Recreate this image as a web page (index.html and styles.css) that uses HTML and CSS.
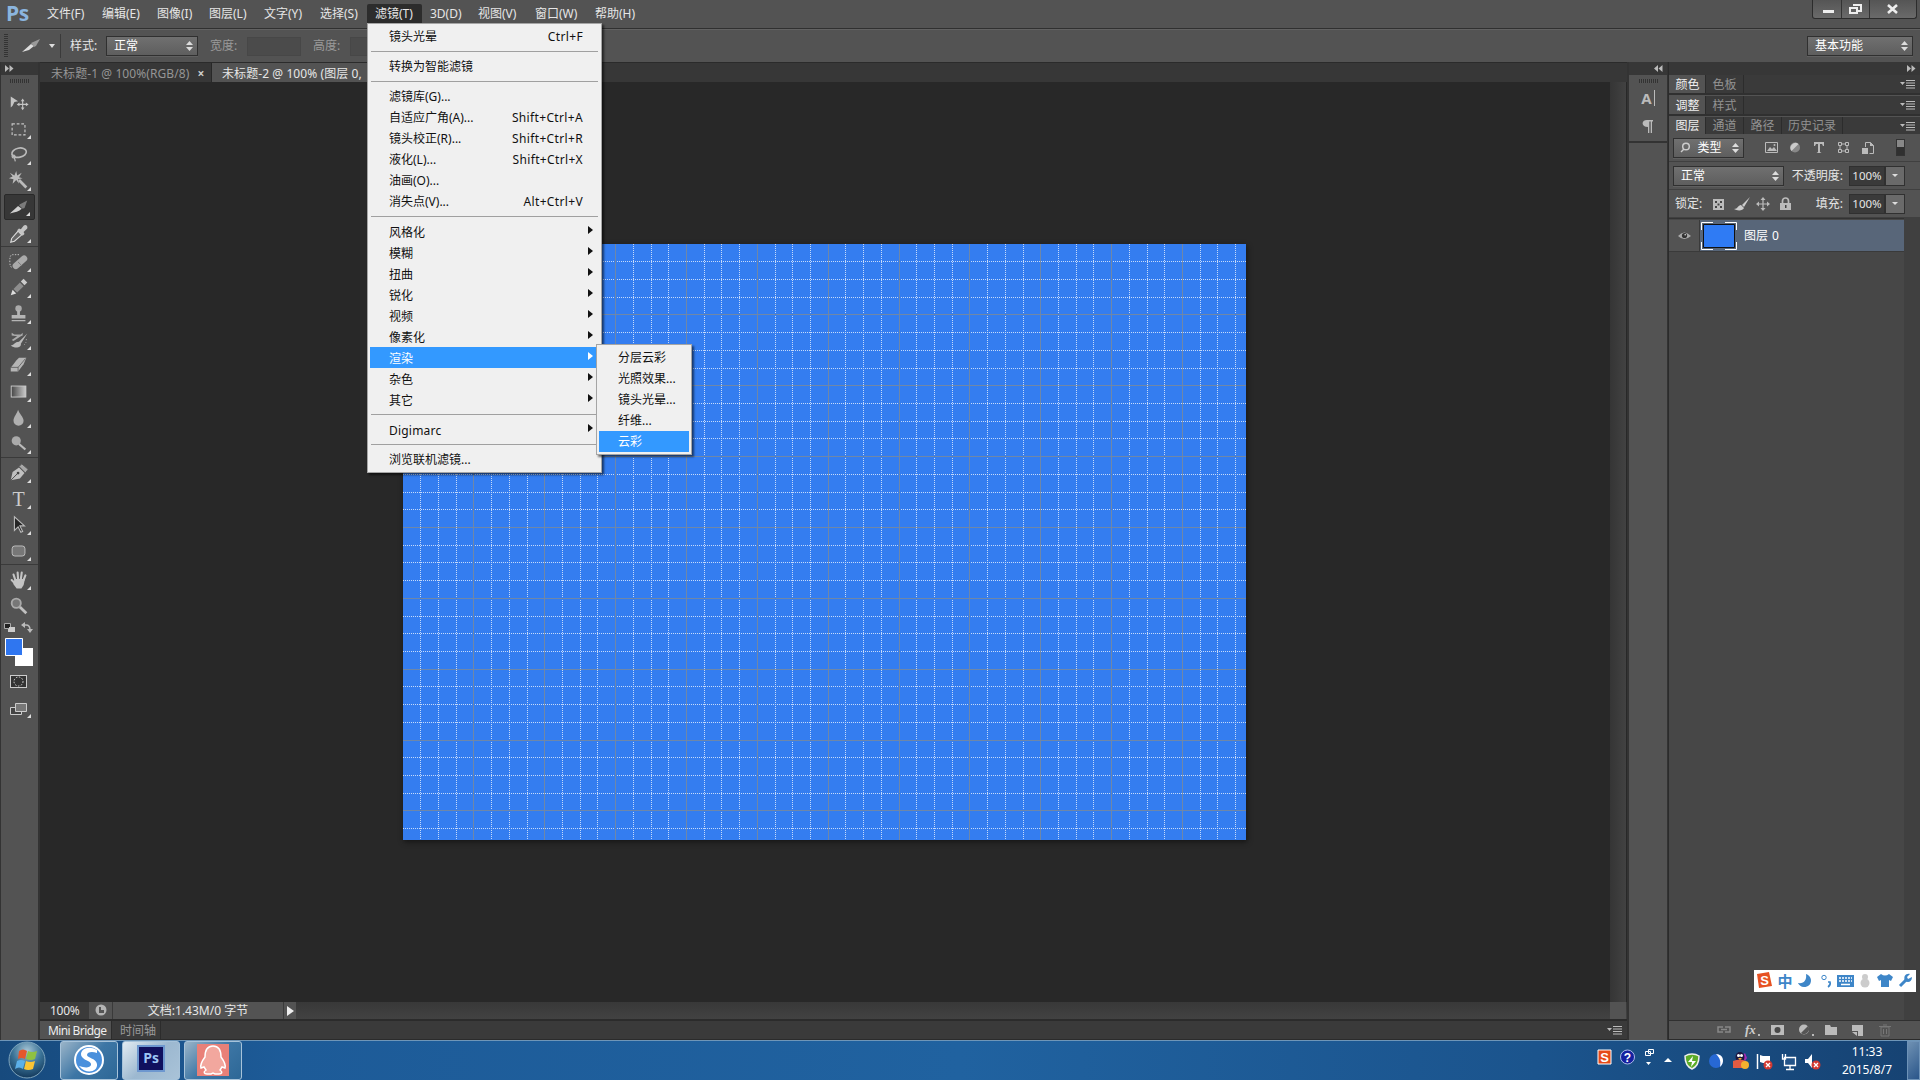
FILE: index.html
```
<!DOCTYPE html>
<html lang="zh-CN">
<head>
<meta charset="utf-8">
<title>Photoshop</title>
<link rel="stylesheet" href="styles.css">
</head>
<body>
<div class="app">
  <header class="menubar">
    <div class="logo">Ps</div>
    <nav class="menus">
      <span class="m55">文件(F)</span><span class="m55">编辑(E)</span><span class="m52">图像(I)</span><span class="m55">图层(L)</span><span class="m56">文字(Y)</span><span class="m55">选择(S)</span><span class="m55 open">滤镜(T)</span><span class="m48">3D(D)</span><span class="m57">视图(V)</span><span class="m60">窗口(W)</span><span class="m57">帮助(H)</span>
    </nav>
    <div class="winbtns">
      <span><svg width="28" height="18"><path d="M10 10h11v3H10z" fill="#eee"/></svg></span>
      <span><svg width="27" height="18" fill="none" stroke="#eee" stroke-width="2"><path d="M11 5h8v6h-3M8 8h7v5H8z"/></svg></span>
      <span><svg width="46" height="18" stroke="#eee" stroke-width="2.6"><path d="M18 5l9 8M27 5l-9 8"/></svg></span>
    </div>
  </header>

  <div class="options">
    <i class="grip-v"></i>
    <svg class="opt-icon" width="36" height="20"><path d="M0 16L9 8l3 2-5 4z" fill="#ddd"/><path d="M9 7l9-4-4 7-2 1z" fill="#999"/><path d="M27 8h6l-3 4z" fill="#ddd"/></svg>
    <i class="vsep"></i>
    <label class="lbl-style">样式:</label>
    <div class="select sel-style">正常<svg width="7" height="12"><path d="M0 5l3.500-4L7 5zM0 7l3.500 4L7 7z" fill="#ddd"/></svg></div>
    <label class="dim lbl-w">宽度:</label><i class="field"></i>
    <label class="dim lbl-h">高度:</label><i class="field"></i>
    <div class="select sel-ws">基本功能<svg width="7" height="12"><path d="M0 5l3.500-4L7 5zM0 7l3.500 4L7 7z" fill="#ddd"/></svg></div>
  </div>

  <main class="work">
    <aside class="toolbox">
      <div class="collapse left"><svg width="9" height="7"><path d="M0 0l4 3.500L0 7zM4.500 0l4 3.500-4 3.500z" fill="#bbb"/></svg></div>
      <div class="grip-h"></div>
      <div class="group">
        <div class="tool"><svg viewBox="0 0 24 24"><path d="M3 5l8 5-4 1-2 4-2 2z" fill="#c4c4c4"/><path d="M16 9v9M11.500 13.500h9" stroke="#c4c4c4" stroke-width="1.200"/><path d="M14 10l2-3 2 3zM14 17l2 3 2-3zM12.500 11.500l-3 2 3 2zM19.500 11.500l3 2-3 2z" fill="#c4c4c4"/></svg></div>
        <div class="tool more"><svg viewBox="0 0 24 24"><path d="M4.500 6.500h14v12h-14z" fill="none" stroke="#c4c4c4" stroke-width="1.300" stroke-dasharray="3 2"/></svg></div>
        <div class="tool more"><svg viewBox="0 0 24 24"><ellipse cx="12" cy="9.500" rx="8" ry="5" transform="rotate(-12 12 9)" fill="none" stroke="#bbb" stroke-width="1.800"/><path d="M6 12c-3 1-1 4 1 3s0-3-1-3M7 15l1 4" fill="none" stroke="#bbb" stroke-width="1.300"/></svg></div>
        <div class="tool more"><svg viewBox="0 0 24 24"><path d="M9 1l1 5 5-3-3 5 4 1-5 1 1 5-3-4-4 4 1-5-5-1 4-2-3-4 5 3z" fill="#bbb"/><path d="M12 11l8 8" stroke="#bbb" stroke-width="3"/></svg></div>
        <div class="tool more active"><svg viewBox="0 0 24 24"><path d="M2 19l9-8 4 3c-3 3-7 4-13 5z" fill="#d0d0d0"/><path d="M13 9l8-4-3 8-2 1-4-4z" fill="#7b7b7b"/></svg></div>
        <div class="tool more"><svg viewBox="0 0 24 24"><path d="M11 10l4 4-8 7-4 1 1-4z" fill="#666" stroke="#ddd" stroke-width="1.200"/><path d="M10 9l2-2 2 1 3-4c2-2 5 0 4 3l-4 4 1 2-2 2z" fill="#c4c4c4"/></svg></div>
      </div>
      <div class="group">
        <div class="tool more"><svg viewBox="0 0 24 24"><rect x="4" y="9" width="19" height="7" rx="3.500" transform="rotate(-42 13 13)" fill="#aaa"/><path d="M11 12l4 4" stroke="#777" stroke-width="1"/><path d="M12 4H5C2 4 2 8 2 12s1 6 3 6" fill="none" stroke="#ccc" stroke-dasharray="1.500 1.500"/></svg></div>
        <div class="tool more"><svg viewBox="0 0 24 24"><path d="M3 20l2-6 4 4z" fill="#ddd"/><path d="M6 13l7-7 4 4-7 7z" fill="#8d8d8d"/><path d="M14 5l3-3 4 4-3 3z" fill="#ccc"/></svg></div>
        <div class="tool more"><svg viewBox="0 0 24 24"><circle cx="11.500" cy="6" r="3.500" fill="#aaa"/><path d="M10 8h3v5h6v4H4v-4h6zM4 18.500h15V20H4z" fill="#b5b5b5"/></svg></div>
        <div class="tool more"><svg viewBox="0 0 24 24"><path d="M4 4l3 2h7l2-2v3l-2 1-8 5-2-1 6-4-6-1z" fill="#aaa"/><path d="M21 5l-9 9 2 2zM12 14c-5 0-5 4-9 4 5 4 12 2 11-2z" fill="#bbb"/><path d="M20 11c0 4-1 6-4 7" fill="none" stroke="#aaa" stroke-dasharray="1 2"/></svg></div>
        <div class="tool more"><svg viewBox="0 0 24 24"><path d="M9 6l3-3h8l-3 7-6 8H3v-4z" fill="#b5b5b5"/><path d="M3 13.500h8L19 4M11 13v5" stroke="#666" fill="none"/></svg></div>
        <div class="tool more"><svg viewBox="0 0 24 24"><defs><linearGradient id="gr"><stop stop-color="#444"/><stop offset="1" stop-color="#ccc"/></linearGradient></defs><rect x="3.500" y="5.500" width="16" height="12" fill="url(#gr)" stroke="#ccc"/></svg></div>
        <div class="tool more"><svg viewBox="0 0 24 24"><path d="M11 3c1 4 6 8 6 12a5.500 5.500 0 0 1-11 0c0-4 4-8 5-12z" fill="#b0b0b0"/></svg></div>
        <div class="tool more"><svg viewBox="0 0 24 24"><circle cx="9" cy="8.500" r="5" fill="#aaa"/><path d="M12 12l7 6" stroke="#bbb" stroke-width="2.500"/></svg></div>
      </div>
      <div class="group">
        <div class="tool more"><svg viewBox="0 0 24 24"><path d="M3 20l2-9 7-5 6 6-5 6z" fill="#c0c0c0"/><path d="M3 20l7-7" stroke="#444"/><circle cx="11" cy="12" r="1.500" fill="#444"/><path d="M12 5l3-3 7 6-3 4z" fill="#a8a8a8" stroke="#535353"/></svg></div>
        <div class="tool more serif">T</div>
        <div class="tool more"><svg viewBox="0 0 24 24"><path d="M7 3v15l4-4 3 6 2-1-3-6h5z" fill="#252525" stroke="#bbb" stroke-width="1.200"/></svg></div>
        <div class="tool more"><svg viewBox="0 0 24 24"><rect x="4.500" y="6.500" width="14" height="11" rx="3" fill="#777" stroke="#c4c4c4"/></svg></div>
      </div>
      <div class="group last">
        <div class="tool more"><svg viewBox="0 0 24 24" fill="none" stroke="#c4c4c4" stroke-width="2.300" stroke-linecap="round"><path d="M8 12L6 6M11 11l-.5-7M14 11l1-7M17 12l2-5M8 16l-4-4"/><path d="M8 12h9l-1 5-2 3h-4l-3-4z" fill="#c4c4c4"/></svg></div>
        <div class="tool"><svg viewBox="0 0 24 24"><circle cx="9" cy="9" r="5" fill="#777" stroke="#aaa" stroke-width="2"/><path d="M13 13l7 7" stroke="#c0c0c0" stroke-width="3"/></svg></div>
      </div>
      <svg class="swatches" width="34" height="48"><path d="M3.500 4.500h6v5h-6z" fill="#222" stroke="#aaa"/><path d="M8 8h6v5H7v-3h1z" fill="#ccc"/><path d="M22 6h3q4 0 4 5" stroke="#bbb" stroke-width="1.500" fill="none"/><path d="M20 6l4-3v6zM26 10h6l-3 4z" fill="#bbb"/><path d="M14 29h18v18H14z" fill="#fff"/><path d="M4.500 19.500h17v17h-17z" fill="#2f76f0" stroke="#fff"/></svg>
      <svg class="modes" width="34" height="54"><rect x="9.500" y="8.500" width="16" height="12" fill="#333" stroke="#ccc"/><circle cx="17.500" cy="14.500" r="4.500" fill="none" stroke="#ddd" stroke-dasharray="1.500 1.500"/><path d="M9.500 40.500h11v7h-11z" fill="#444" stroke="#ccc"/><path d="M14.500 36.500h11v8h-11z" fill="#777" stroke="#ccc"/><path d="M30 47v4h-4z" fill="#ddd"/></svg>
    </aside>

    <section class="docarea">
      <div class="doctabs">
        <div class="tab t1">未标题-1 @ 100%(RGB/8) <b>×</b></div>
        <div class="tab t2">未标题-2 @ 100% (图层 0,</div>
      </div>
      <div class="view">
        <div class="stage"><svg id="grid" class="canvas" width="843" height="596" shape-rendering="crispEdges"></svg></div>
        <i class="vscroll"></i>
      </div>
      <div class="status">
        <span class="zoom">100%</span>
        <span class="sicon"><svg width="14" height="14"><circle cx="7" cy="7" r="5.500" fill="#b4b4b4"/><path d="M5 4v6h5V7H7V4z" fill="#555"/></svg></span>
        <span class="doc">文档:1.43M/0 字节</span>
        <span class="play"><svg width="8" height="10"><path d="M0 0l7 5-7 5z" fill="#eee"/></svg></span>
        <i class="corner"></i>
      </div>
      <div class="bottomtabs"><span class="on">Mini Bridge</span><span>时间轴</span><svg class="pm" width="15" height="9"><path d="M0 2h5L2.500 5z" fill="#bbb"/><path d="M6 .5h9M6 3h9M6 5.500h9M6 8h9" stroke="#bbb"/></svg></div>
    </section>

    <aside class="strip">
      <div class="collapse right"><svg width="9" height="7"><path d="M4 0L0 3.500 4 7zM8.500 0l-4 3.500 4 3.500z" fill="#bbb"/></svg></div>
      <div class="grip-h"></div>
      <div class="stripicons"><span class="chr">A<i></i></span><svg width="14" height="15"><path d="M6 1h6v1.500h-1V14H9.700V2.500H8.300V14H7V8C0 8 0 1 6 1z" fill="#bbb"/></svg></div>
    </aside>

    <aside class="panels">
      <div class="collapse right"><svg width="9" height="7"><path d="M0 0l4 3.500L0 7zM4.500 0l4 3.500-4 3.500z" fill="#bbb"/></svg></div>
      <div class="ptabs"><span class="on">颜色</span><span>色板</span><svg class="pm" width="15" height="9"><path d="M0 2h5L2.500 5z" fill="#bbb"/><path d="M6 .5h9M6 3h9M6 5.500h9M6 8h9" stroke="#bbb"/></svg></div>
      <div class="ptabs"><span class="on">调整</span><span>样式</span><svg class="pm" width="15" height="9"><path d="M0 2h5L2.500 5z" fill="#bbb"/><path d="M6 .5h9M6 3h9M6 5.500h9M6 8h9" stroke="#bbb"/></svg></div>
      <div class="ptabs last"><span class="on">图层</span><span>通道</span><span>路径</span><span class="wide">历史记录</span><svg class="pm" width="15" height="9"><path d="M0 2h5L2.500 5z" fill="#bbb"/><path d="M6 .5h9M6 3h9M6 5.500h9M6 8h9" stroke="#bbb"/></svg></div>
      <div class="row filter">
        <div class="select kind"><svg width="11" height="11" fill="none" stroke="#ccc" stroke-width="1.500"><circle cx="6" cy="4.500" r="3.300"/><path d="M4 7l-3 3"/></svg><em>类型</em><svg width="7" height="12"><path d="M0 5l3.500-4L7 5zM0 7l3.500 4L7 7z" fill="#ddd"/></svg></div>
        <svg width="114" height="18"><path d="M1.500 3.500h12v10h-12z" fill="#555" stroke="#bbb"/><path d="M3 12l3-4 2 2 2-2 3 4z" fill="#bbb"/><circle cx="10.500" cy="6" r="1" fill="#bbb"/><circle cx="31" cy="8.500" r="5" fill="#888"/><path d="M27.500 12A5 5 0 0 1 34.500 5z" fill="#ccc"/><path d="M50 3h10v4h-1l-1-2h-2v8l1.500 1h-5l1.500-1V5h-2l-1 2h-1z" fill="#bbb"/><path d="M76 5h7v7h-7z" fill="none" stroke="#bbb"/><path d="M74.500 3.500h3v3h-3zM81.500 3.500h3v3h-3zM74.500 10.500h3v3h-3zM81.500 10.500h3v3h-3z" fill="#555" stroke="#bbb"/><path d="M101.500 8V3.500h5l3 3v8h-4" fill="none" stroke="#bbb"/><path d="M98 9h6v6h-6zM106 3l4 4h-4z" fill="#bbb"/></svg>
        <i class="toggle"></i>
      </div>
      <div class="row">
        <div class="select blend">正常<svg width="7" height="12"><path d="M0 5l3.500-4L7 5zM0 7l3.500 4L7 7z" fill="#ddd"/></svg></div>
        <label class="end">不透明度:</label><span class="num">100%</span><span class="drop"><svg width="6" height="3"><path d="M0 0h6L3 3z" fill="#ddd"/></svg></span>
      </div>
      <div class="row">
        <label class="lock">锁定:</label>
        <svg width="86" height="16"><path d="M4 3h11v11H4z" fill="#bbb"/><path d="M6 5h2v2H6zM11 5h2v2h-2zM8.500 7.500h2v2h-2zM6 10h2v2H6zM11 10h2v2h-2z" fill="#444"/><path d="M41 1l-8 8 2 2zM32 9c-3 0-3 4-7 4 3 2 9 2 10-1z" fill="#ccc"/><path d="M54 3v10M49 8h10" stroke="#bbb" stroke-width="1.200"/><path d="M51.500 4L54 1l2.500 3zM51.500 12l2.500 3 2.500-3zM50 5.500L47 8l3 2.500zM58 5.500L61 8l-3 2.500z" fill="#bbb"/><path d="M71 7h11v7H71z" fill="#bbb"/><path d="M73.500 7V5a3 3 0 0 1 6 0v2" fill="none" stroke="#bbb" stroke-width="1.700"/><path d="M76 9h1.500v3H76z" fill="#444"/></svg>
        <label class="end">填充:</label><span class="num">100%</span><span class="drop"><svg width="6" height="3"><path d="M0 0h6L3 3z" fill="#ddd"/></svg></span>
      </div>
      <div class="layers">
        <div class="list">
          <div class="layer">
            <span class="eye"><svg width="13" height="9"><path d="M0 5Q6-2 13 5 6 11 0 5z" fill="#aaa"/><circle cx="6.500" cy="4.500" r="2.600" fill="#333"/><circle cx="7.200" cy="3.800" r=".8" fill="#ddd"/></svg></span>
            <div class="info"><svg width="36" height="28"><path d="M.5 8V.5H12M24 .5h11.500V8M.5 20v7.500H12M24 27.500h11.500V20" fill="none" stroke="#fff"/><path d="M2.500 2.500h31v23h-31z" fill="#2f7bf4" stroke="#111"/></svg>图层 0</div>
          </div>
        </div>
        <i class="lscroll"></i>
      </div>
      <div class="lfoot">
        <svg width="180" height="18"><g fill="none" stroke="#888" stroke-width="1.500"><path d="M8 6H3v5h5M10 6h5v5h-5M6 8.500h6"/></g><text x="30" y="13" class="fx">fx</text><path d="M43 13h2v2h-2z" fill="#bbb"/><path d="M56 4h13v10H56z" fill="#bbb"/><circle cx="62.500" cy="9" r="3" fill="#484848"/><circle cx="89" cy="8.500" r="5" fill="#bbb"/><path d="M86 12A5 5 0 0 0 93 5z" fill="#555"/><path d="M97 13h2v2h-2z" fill="#bbb"/><path d="M110 4h5l1 2h6v8h-12z" fill="#bbb"/><path d="M137 4h11v11h-5v-5h-6z" fill="#bbb"/><path d="M137 11h5v4z" fill="#bbb"/><path d="M166 6h8v9h-8zM164 5.500h12M168 4h4M168.500 8v5M171.500 8v5" fill="none" stroke="#777"/></svg>
      </div>
    </aside>
  </main>

  <footer class="taskbar">
    <svg class="orb" width="40" height="39"><defs><radialGradient id="o" cx=".5" cy=".25" r=".8"><stop stop-color="#a8c6d6"/><stop offset=".5" stop-color="#3b7397"/><stop offset="1" stop-color="#0d3052"/></radialGradient></defs><circle cx="19" cy="19" r="18" fill="url(#o)" stroke="#7fa5bd"/><path d="M11 10q4-3 8 0l-2 8q-4-2-7 0z" fill="#e5572c"/><path d="M20 10q4 2 9 0l-2 8q-4 2-9 0z" fill="#8fc142"/><path d="M9 20q4-2 8 0l-2 8q-4-3-8 0z" fill="#5cb0e8"/><path d="M18 20q4 2 9 0l-2 8q-5 2-9 0z" fill="#fbc534"/></svg>
    <div class="task"><svg width="32" height="32"><circle cx="16" cy="16" r="15" fill="#fff"/><circle cx="16" cy="16" r="13" fill="#4a90dc"/><path d="M24 6c-10-6-19 1-15 7 3 4 10 4 9 8-1 3-6 3-12 1 7 9 19 6 18-2-1-6-10-6-10-9 0-3 5-4 10-2z" fill="#fff"/></svg></div>
    <div class="task cur"><span class="psicon">Ps</span></div>
    <div class="task"><svg width="32" height="32"><path d="M0 0h32v32H0z" fill="#e98078"/><path d="M16 2c7 0 8 6 8 11 3 4 5 8 4 11l-3-1-2 3c3 2 2 4-1 4h-4l-2-1-2 1h-4c-3 0-4-2-1-4l-2-3-3 1c-1-3 1-7 4-11 0-5 1-11 8-11z" fill="#f2a79e" stroke="#fff" stroke-width="1.500"/></svg></div>
    <div class="tray">
      <svg width="234" height="38"><path d="M1 9h13v14H1z" fill="#e64a19" stroke="#fff"/><text x="7.500" y="21" class="sg">S</text><circle cx="30.500" cy="16" r="7" fill="#1420a0" stroke="#aab8e8"/><text x="30.500" y="20.500" class="q">?</text><path d="M51.500 8.500h5v4h-5zM48.500 10.500h5v4h-5z" fill="#1d5288" stroke="#fff"/><path d="M49 21h5l-2.500 3zM67 21h8l-4 -4z" fill="#fff"/><path d="M95 13q4 0 7 2 0 10-7 13-7-3-7-13 3-2 7-2z" fill="#5cac28" stroke="#eee" stroke-width="1.500"/><path d="M96 15l-5 6h4l-1 5 5-6h-4z" fill="#fff"/><circle cx="119" cy="20" r="7" fill="#2768d4"/><path d="M119 13c8 0 9 9 4 13 1-6 0-9-4-13z" fill="#fff"/><path d="M148 12l2 5-2 3-3-5z" fill="#a52bb8"/><ellipse cx="143" cy="16" rx="4.500" ry="5" fill="#1d1740"/><path d="M136 20q7-3 13 0v7h-13z" fill="#e35b42"/><circle cx="148" cy="24" r="4" fill="#f4b12f"/><circle cx="141.500" cy="14.500" r="1.500" fill="#fff"/><circle cx="144.500" cy="14.500" r="1.500" fill="#fff"/><path d="M141 17h4l-2 2z" fill="#f4b12f"/><path d="M160.500 13v15" stroke="#fff" stroke-width="1.500"/><path d="M163 14l3 1h7v7h-7l-3-1z" fill="#fff"/><circle cx="171" cy="24" r="4.500" fill="#d33a32"/><path d="M169 22l4 4m0-4l-4 4" stroke="#fff" stroke-width="1.300"/><path d="M187.500 16.500h11v8h-11zM193 25v3m-4 .5h8M185.500 13v5h3v-5" fill="#245489" stroke="#fff" stroke-width="1.300"/><path d="M208 18h3l4-5v14l-4-5h-3z" fill="#fff"/><circle cx="219" cy="24" r="4.500" fill="#d33a32"/><path d="M217 22l4 4m0-4l-4 4" stroke="#fff" stroke-width="1.300"/></svg>
    </div>
    <div class="clock">11:33<br>2015/8/7</div>
    <i class="showdesk"></i>
  </footer>

  <div class="popup filtermenu">
    <div class="item">镜头光晕<kbd>Ctrl+F</kbd></div><hr>
    <div class="item">转换为智能滤镜</div><hr>
    <div class="item">滤镜库(G)...</div>
    <div class="item">自适应广角(A)...<kbd>Shift+Ctrl+A</kbd></div>
    <div class="item">镜头校正(R)...<kbd>Shift+Ctrl+R</kbd></div>
    <div class="item">液化(L)...<kbd>Shift+Ctrl+X</kbd></div>
    <div class="item">油画(O)...</div>
    <div class="item">消失点(V)...<kbd>Alt+Ctrl+V</kbd></div><hr>
    <div class="item sub">风格化</div><div class="item sub">模糊</div><div class="item sub">扭曲</div><div class="item sub">锐化</div><div class="item sub">视频</div><div class="item sub">像素化</div><div class="item sub hot">渲染</div><div class="item sub">杂色</div><div class="item sub">其它</div><hr>
    <div class="item sub latin">Digimarc</div><hr>
    <div class="item">浏览联机滤镜...</div>
  </div>
  <div class="popup submenu">
    <div class="item">分层云彩</div><div class="item">光照效果...</div><div class="item">镜头光晕...</div><div class="item">纤维...</div><div class="item hot">云彩</div>
  </div>

  <div class="ime">
    <svg width="162" height="22"><path d="M3 4l12-2 3 14-13 2z" fill="#e65122"/><text x="10.500" y="15" class="sg">S</text><text x="31" y="17" class="zh">中</text><path d="M52 4c7 2 7 13-2 13-3 0-5-2-6-4 6 1 9-3 8-9z" fill="#3e86c8"/><circle cx="70" cy="7.500" r="2.200" fill="none" stroke="#3e86c8"/><path d="M74 12h2q1 3-2 5" stroke="#3e86c8" stroke-width="1.600" fill="none"/><path d="M83 5h17v12H83z" fill="#3e86c8"/><path d="M85 8h13M85 11h13" stroke="#fff" stroke-width="1.500" stroke-dasharray="2 1"/><path d="M87 14.500h9" stroke="#fff" stroke-width="1.500"/><circle cx="111" cy="7" r="3" fill="#ccc"/><circle cx="111" cy="13" r="4.500" fill="#ccc"/><path d="M127 4q4 3 8 0l4 3-2 4-2-1v7h-8v-7l-2 1-2-4z" fill="#3e86c8"/><path d="M146 16l7-7" stroke="#3e86c8" stroke-width="3"/><path d="M156 4l-3 3 1 2 4-2c0 5-4 6-7 4-2-5 1-8 5-7z" fill="#3e86c8"/></svg>
  </div>
</div>
<script src="grid.js"></script>
</body>
</html>
```
FILE: grid.js
```
// Document grid: dotted subdivisions, with a solid line at every fourth step.
const svg = document.getElementById('grid');
const W = 843, H = 596, STEP = 17.717;
function line(x1, y1, x2, y2, major) {
  const l = document.createElementNS('http://www.w3.org/2000/svg', 'line');
  l.setAttribute('x1', x1); l.setAttribute('y1', y1);
  l.setAttribute('x2', x2); l.setAttribute('y2', y2);
  l.setAttribute('class', major ? 'major' : 'minor');
  svg.appendChild(l);
}
for (const major of [false, true]) {
  for (let k = 1; k * STEP < W; k++) {
    const x = Math.floor(k * STEP) + 0.5;
    if ((k % 4 === 0) === major) line(x, 0, x, H, major);
  }
  for (let k = 1; k * STEP < H; k++) {
    const y = Math.floor(k * STEP) + 0.5;
    if ((k % 4 === 0) === major) line(0, y, W, y, major);
  }
}
```
FILE: styles.css
```
* { box-sizing: border-box; }
body { margin: 0; width: 1920px; height: 1080px; overflow: hidden; background: #282828; color: #e6e6e6; font: 12px/16px "Noto Sans", "Noto Sans CJK SC", sans-serif; }
svg { display: block; flex: none; }
i, em { font-style: normal; }
.app { position: relative; height: 1080px; display: flex; flex-direction: column; }

.menubar { height: 29px; background: #535353; border-bottom: 1px solid #303030; display: flex; }
.logo { width: 47px; padding: 3px 0 0 6px; color: #8bb5de; font: bold 21px/21px "Open Sans", sans-serif; letter-spacing: -.5px; }
.menus { display: flex; height: 20px; margin-top: 4px; }
.menus span { white-space: nowrap; line-height: 20px; }
.m48 { width: 48px; } .m52 { width: 52px; } .m55 { width: 55px; } .m56 { width: 56px; } .m57 { width: 57px; } .m60 { width: 60px; }
.menus .open { background: #2c2c2c; margin: 0 0 0 -8px; padding-left: 8px; border-radius: 2px 2px 0 0; }
.menus .open + span { width: 56px; padding-left: 8px; }
.winbtns { margin-left: auto; margin-right: 3px; display: flex; height: 19px; border: 1px solid #2c2c2c; border-top: 0; border-radius: 0 0 3px 3px; background: linear-gradient(#555, #6a6a6a); }
.winbtns span + span { border-left: 1px solid #333; }

.options { height: 33px; background: #535353; border-top: 1px solid #626262; display: flex; align-items: center; padding-left: 4px; }
.grip-v { width: 4px; height: 24px; background: repeating-linear-gradient(#333 0 1px, #555 1px 2px); }
.opt-icon { margin-left: 14px; }
.vsep { width: 1px; height: 24px; background: #3a3a3a; margin-left: 2px; }
.lbl-style { width: 36px; margin-left: 9px; }
.select { height: 20px; border: 1px solid #303030; background: linear-gradient(#707070, #5e5e5e); color: #fff; display: flex; align-items: center; justify-content: space-between; padding: 0 4px 0 7px; box-shadow: 0 1px #606060; }
.sel-style { width: 92px; }
.dim { color: #9a9a9a; }
.lbl-w { margin-left: 12px; width: 37px; }
.lbl-h { margin-left: 12px; width: 37px; }
.field { width: 54px; height: 19px; background: #4b4b4b; border: 1px solid #474747; }
.sel-ws { margin-left: auto; margin-right: 7px; width: 106px; }

.work { height: 978px; display: flex; background: #333; }
.toolbox { width: 38px; background: #535353; border-left: 1px solid #333; margin-right: 2px; }
.collapse { height: 13px; flex: none; background: #373737; display: flex; align-items: center; padding: 0 4px; }
.collapse.right { justify-content: flex-end; }
.grip-h { height: 15px; display: flex; }
.grip-h::after { content: ""; width: 19px; height: 4px; margin: 4px auto; background: repeating-linear-gradient(90deg, #333 0 1px, #555 1px 2px); }
.group { border-bottom: 1px solid #3a3a3a; margin-bottom: 2px; }
.group.last { border: 0; margin: 0; }
.group .tool { height: 26px; margin: 0 3px; display: flex; justify-content: center; align-items: center; padding-right: 2px; }
.tool { position: relative; }
.tool svg { width: 22px; height: 22px; }
.tool.more::after { content: ""; position: absolute; right: 4px; bottom: 3px; border: 2px solid transparent; border-right-color: #ddd; border-bottom-color: #ddd; }
.tool.active { background: #373737; border: 1px solid #292929; border-radius: 2px; }
.serif { font: 20px/20px "Liberation Serif", serif; color: #ccc; }

.docarea { width: 1587px; display: flex; flex-direction: column; }
.doctabs { height: 20px; background: #373737; display: flex; border-top: 1px solid #2b2b2b; }
.tab { height: 19px; line-height: 21px; white-space: nowrap; overflow: hidden; }
.t1 { width: 172px; padding-left: 11px; color: #959595; border-right: 1px solid #282828; display: flex; gap: 8px; letter-spacing: .08px; }
.t1 b { color: #ccc; }
.t2 { width: 155px; padding-left: 10px; background: #535353; letter-spacing: .08px; }
.view { height: 920px; display: flex; background: #282828; }
.stage { width: 1570px; padding: 162px 0 0 363px; }
.canvas { background: #347df0; box-shadow: 1px 2px 5px #151515; }
.minor { stroke: #c6dafa; stroke-dasharray: 1 1; }
.major { stroke: #6f87a8; }
.vscroll { width: 16px; background: linear-gradient(90deg, #353535, #424242); }
.status { height: 17px; background: linear-gradient(#383838, #424242); display: flex; line-height: 17px; }
.status .zoom { width: 49px; padding-left: 10px; background: #3b3b3b; letter-spacing: -.3px; }
.sicon { width: 24px; background: #535353; border-right: 1px solid #3a3a3a; padding: 1px 0 0 5px; }
.doc { width: 170px; text-align: center; background: #535353; }
.play { width: 13px; background: #535353; border-left: 1px solid #3a3a3a; padding: 4px 0 0 3px; }
.corner { width: 16px; margin-left: auto; margin-right: 1px; background: #535353; }
.bottomtabs { height: 21px; border-top: 2px solid #2b2b2b; border-bottom: 1px solid #2b2b2b; background: #3a3a3a; display: flex; line-height: 19px; }
.bottomtabs span { padding: 0 0 0 8px; width: 49px; white-space: nowrap; color: #9b9b9b; border-right: 1px solid #2c2c2c; }
.bottomtabs .on { width: 72px; background: #535353; color: #eee; letter-spacing: -.6px; }
.bottomtabs .pm { margin: 5px 5px 0 auto; }

.strip { width: 38px; margin: 0 1px 0 2px; background: #535353; }
.stripicons { height: 53px; border-bottom: 2px solid #333; display: flex; flex-direction: column; align-items: center; gap: 13px; }
.chr { display: flex; align-items: center; gap: 2px; font: bold 15px/15px "Noto Sans", sans-serif; color: #bbb; }
.chr i { width: 1px; height: 16px; background: #bbb; }

.panels { width: 252px; background: #535353; border-left: 1px solid #2b2b2b; display: flex; flex-direction: column; }
.ptabs { height: 18px; flex: none; background: #3a3a3a; display: flex; margin-bottom: 3px; box-shadow: 0 2px #303030; line-height: 19px; }
.ptabs.last { margin: 0; box-shadow: none; height: 17px; line-height: 18px; }
.ptabs span { width: 38px; text-align: center; color: #929292; border-right: 1px solid #2c2c2c; }
.ptabs span:first-child { width: 37px; padding-left: 1px; }
.ptabs .wide { width: 61px; }
.ptabs .on { background: #535353; color: #f0f0f0; }
.ptabs .pm { margin: 5px 5px 0 auto; }
.row { height: 28px; flex: none; display: flex; align-items: center; padding: 0 15px 0 4px; border-bottom: 1px solid #404040; }
.row em { margin-right: 4px; }
.kind { width: 71px; padding-left: 6px; margin-right: 20px; padding-right: 4px; }
.toggle { width: 9px; height: 17px; margin-left: auto; background: linear-gradient(#888 0 45%, #303030 45%); border: 1px solid #333; }
.blend { width: 111px; }
.end { margin-left: auto; margin-right: 6px; }
.num { width: 36px; height: 20px; background: #3a3a3a; border: 1px solid #303030; line-height: 18px; text-align: center; font-size: 11.500px; }
.drop { width: 20px; height: 20px; background: #6a6a6a; border: 1px solid #303030; display: flex; align-items: center; justify-content: center; }
.lock { width: 36px; padding-left: 2px; white-space: nowrap; }
.layers { flex: 1; display: flex; background: #474747; }
.list { width: 235px; padding-top: 1px; border-top: 1px solid #333; }
.layer { height: 32px; display: flex; border-bottom: 1px solid #3a3a3a; }
.eye { width: 31px; background: #535353; padding: 11px 0 0 9px; border-right: 1px solid #3a3a3a; }
.info { flex: 1; background: #586679; display: flex; align-items: center; gap: 7px; padding-left: 1px; color: #fff; word-spacing: 1px; }
.lscroll { width: 16px; background: #404040; }
.lfoot { height: 20px; flex: none; border-top: 1px solid #303030; border-bottom: 1px solid #2b2b2b; padding-left: 46px; }
.fx { font: italic bold 13px "Liberation Serif", serif; fill: #ccc; }

.taskbar { height: 40px; display: flex; background: linear-gradient(90deg, #174a7d, #1d5b98 15%, #2062a0 50%, #1b548d 80%, #164272); border-top: 1px solid #6f96b8; }
.orb { margin: 0 12px 0 8px; }
.task { width: 58px; height: 39px; margin-right: 4px; display: flex; align-items: center; justify-content: center; border: 1px solid #a7c3da; border-radius: 3px; background: linear-gradient(135deg, #9ab4c8, #3d76a5 50%, #2d6796); }
.task svg { margin-top: -2px; }
.task.cur { background: linear-gradient(135deg, #e2ebf2, #9cb8d0 50%, #a9c3d8); }
.psicon { width: 28px; height: 27px; margin-top: -4px; background: #10105e; border: 2px solid #6d97cf; color: #9cc6f5; font: bold 14px/21px "Open Sans", sans-serif; text-align: center; }
.tray { margin-left: auto; }
.clock { width: 72px; text-align: center; color: #fff; line-height: 18px; padding-top: 2px; margin: 0 4px 0 0; }
.showdesk { width: 13px; border: 1px solid #6e93b8; background: linear-gradient(135deg, #6f91b3, #2a568a); }
.sg { font: bold 13px "Liberation Sans", sans-serif; fill: #fff; text-anchor: middle; }
.q { font: bold 12px "Liberation Sans", sans-serif; fill: #fff; text-anchor: middle; }
.zh { font: bold 15px "Noto Sans CJK SC", sans-serif; fill: #3e86c8; text-anchor: middle; }

.popup { position: absolute; background: #f0f0f0; border: 1px solid #a5a5a5; color: #111; padding: 1px 2px; box-shadow: 2px 2px 2px rgba(0,0,0,.55); }
.filtermenu { left: 367px; top: 23px; width: 235px; height: 450px; padding-top: 2px; }
.submenu { left: 596px; top: 344px; width: 96px; height: 111px; padding-top: 2px; }
.item { height: 21px; line-height: 22px; padding-left: 19px; display: flex; position: relative; white-space: nowrap; }
.item.sub { line-height: 24px; }
.item kbd { font: inherit; letter-spacing: .35px; margin-left: auto; margin-right: 16px; }
.hot { background: #3399ff; color: #fff; }
.sub::after { content: ""; margin: 5px 6px 0 auto; width: 0; height: 0; border: 4px solid transparent; border-left: 5px solid currentColor; border-right: 0; }
.latin { letter-spacing: .2px; }
.popup hr { height: 1px; border: 0; background: #a0a0a0; margin: 4px 1px; }
.ime { position: absolute; left: 1754px; top: 970px; width: 162px; height: 22px; background: #fff; }
```
